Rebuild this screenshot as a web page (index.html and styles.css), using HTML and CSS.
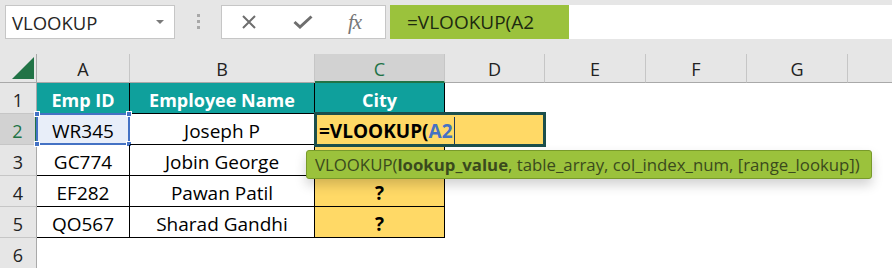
FILE: index.html
```html
<!DOCTYPE html>
<html>
<head>
<meta charset="utf-8">
<link rel="stylesheet" href="styles.css">
</head>
<body>
<div class="topbar">
  <div class="namebox"><span>VLOOKUP</span><span class="caret"></span></div>
  <div class="grip"><i></i><i></i><i></i></div>
  <div class="fxbtns">
    <span class="btn"><svg width="16" height="14" viewBox="0 0 16 14"><path d="M2 1 L14 13 M14 1 L2 13" stroke="#6e6e6e" stroke-width="2" fill="none"/></svg></span>
    <span class="btn"><svg width="20" height="14" viewBox="0 0 20 14"><path d="M1.5 7 L7 12 L18.5 1.5" stroke="#6e6e6e" stroke-width="3" fill="none"/></svg></span>
    <span class="btn fx">fx</span>
  </div>
  <div class="fbar"><span class="fsel">=VLOOKUP(A2</span></div>
</div>
<div class="sheet">
  <div class="grid">
    <div class="ch corner"><svg width="22" height="22" viewBox="0 0 22 22"><path d="M0 22 L22 22 L22 0 Z" fill="#217346"/></svg></div>
    <div class="ch">A</div><div class="ch">B</div><div class="ch sel">C</div><div class="ch">D</div><div class="ch">E</div><div class="ch">F</div><div class="ch">G</div><div class="ch last"></div>

    <div class="rh">1</div><div class="c hd">Emp ID</div><div class="c hd">Employee Name</div><div class="c hd">City</div><div></div><div></div><div></div><div></div><div></div>

    <div class="rh sel">2</div><div class="c a2">WR345<span class="selbox"><i class="h1"></i><i class="h2"></i><i class="h3"></i><i class="h4"></i></span></div><div class="c">Joseph P</div><div class="c y"></div><div></div><div></div><div></div><div></div><div></div>

    <div class="rh">3</div><div class="c">GC774</div><div class="c">Jobin George</div><div class="c y"></div><div></div><div></div><div></div><div></div><div></div>

    <div class="rh">4</div><div class="c">EF282</div><div class="c">Pawan Patil</div><div class="c y q">?</div><div></div><div></div><div></div><div></div><div></div>

    <div class="rh">5</div><div class="c">QO567</div><div class="c">Sharad Gandhi</div><div class="c y q">?</div><div></div><div></div><div></div><div></div><div></div>

    <div class="rh">6</div><div></div><div></div><div></div><div></div><div></div><div></div><div></div><div></div>
  </div>
  <div class="editbox">=VLOOKUP(<span class="ref">A2</span><span class="cursor"></span></div>
  <div class="tip">VLOOKUP(<b>lookup_value</b>, table_array, col_index_num, [range_lookup])</div>
</div>
</body>
</html>
```
FILE: styles.css
```css
* { box-sizing: border-box; }
body {
  margin: 0;
  width: 892px;
  height: 268px;
  overflow: hidden;
  background: #e6e6e6;
  font-family: "Open Sans", "Noto Sans", sans-serif;
}
.topbar {
  display: flex;
  align-items: flex-start;
  height: 54px;
  padding: 5px 0 0 5px;
}
.namebox {
  width: 170px;
  height: 34px;
  background: #fff;
  border: 1px solid #c6c6c6;
  display: flex;
  align-items: center;
  justify-content: space-between;
  padding: 0 10px 0 6px;
  font-size: 18.5px;
  color: #262626;
}
.caret {
  width: 0; height: 0;
  border-left: 4px solid transparent;
  border-right: 4px solid transparent;
  border-top: 4px solid #7a7a7a;
}
.grip {
  width: 46px;
  display: flex;
  flex-direction: column;
  align-items: center;
  gap: 3px;
  padding-top: 9px;
}
.grip i { width: 3px; height: 3px; background: #a8a8a8; }
.fxbtns {
  width: 165px;
  height: 34px;
  background: #fff;
  border: 1px solid #c6c6c6;
  display: flex;
  align-items: center;
  padding-left: 19px;
}
.btn { display: flex; align-items: center; }
.btn:nth-child(2) { margin-left: 36px; }
.fx {
  margin-left: 35px;
  font-family: "Liberation Serif", serif;
  font-style: italic;
  font-size: 21px;
  color: #777;
  letter-spacing: -1px;
}
.fbar {
  flex: 1;
  height: 34px;
  margin-left: 4px;
  background: #fff;
  display: flex;
}
.fsel {
  width: 179px;
  height: 100%;
  background: #9bc23c;
  padding-left: 17px;
  font-size: 19px;
  line-height: 34px;
  color: #1d2a10;
}
.sheet {
  position: relative;
  background: #fff;
  height: 214px;
}
.grid {
  display: grid;
  grid-template-columns: 37px 93px 185px 130px 100px 101px 101px 101px 1fr;
  grid-template-rows: 29px repeat(6, 31px);
}
.ch {
  background: #e6e6e6;
  border-right: 1px solid #c6c6c6;
  border-bottom: 1px solid #a9a9a9;
  display: flex;
  align-items: center;
  justify-content: center;
  font-size: 18px;
  color: #222;
  padding-top: 2px;
}
.ch.last { border-right: none; }
.ch.sel {
  background: #d2d2d2;
  color: #217346;
  border-bottom: 2px solid #217346;
}
.corner {
  justify-content: flex-end;
  align-items: flex-end;
  padding: 0 2px 3px 0;
  border-right-color: #a9a9a9;
}
.corner svg { display: block; }
.rh {
  background: #e6e6e6;
  border-right: 1px solid #a9a9a9;
  border-bottom: 1px solid #c6c6c6;
  display: flex;
  align-items: center;
  justify-content: center;
  font-size: 18px;
  color: #222;
  padding-top: 3px;
}
.rh.sel {
  background: #d2d2d2;
  color: #217346;
  border-right: 2px solid #217346;
}
.c {
  position: relative;
  border-right: 1px solid #000;
  border-bottom: 1px solid #000;
  display: flex;
  align-items: center;
  justify-content: center;
  font-size: 19px;
  color: #000;
  padding-top: 3px;
}
.hd {
  background: #0fa09c;
  color: #fff;
  font-weight: 700;
  font-size: 18px;
}
.y { background: #ffd966; }
.q { font-weight: 700; }
.a2 { background: #e8eef9; }
.selbox {
  position: absolute;
  left: -1px; top: -1px; right: -1px; bottom: -1px;
  border: 2px solid #4472c4;
}
.selbox i {
  position: absolute;
  width: 6px; height: 6px;
  background: #4472c4;
  border: 1px solid #fff;
}
.h1 { left: -4px; top: -4px; }
.h2 { right: -4px; top: -4px; }
.h3 { left: -4px; bottom: -4px; }
.h4 { right: -4px; bottom: -4px; }
.editbox {
  position: absolute;
  left: 314px;
  top: 58px;
  width: 232px;
  height: 35px;
  background: #ffd966;
  border: 3px solid #1c4f4c;
  display: flex;
  align-items: center;
  padding: 2px 0 0 2px;
  font-weight: 700;
  font-size: 19px;
  color: #000;
}
.ref { color: #4472c4; }
.cursor {
  width: 1px;
  height: 27px;
  background: #1c3a5a;
  margin-left: 1px;
  align-self: flex-end;
}
.tip {
  position: absolute;
  left: 306px;
  top: 96px;
  width: 566px;
  height: 29px;
  background: #9bc23c;
  border: 1px solid #789a2a;
  border-radius: 3px;
  box-shadow: 0 6px 12px rgba(0, 0, 0, 0.18);
  font-size: 16.8px;
  line-height: 27px;
  padding-left: 8px;
  color: #3a4a1c;
  white-space: nowrap;
}
.tip b { font-weight: 700; }
```
